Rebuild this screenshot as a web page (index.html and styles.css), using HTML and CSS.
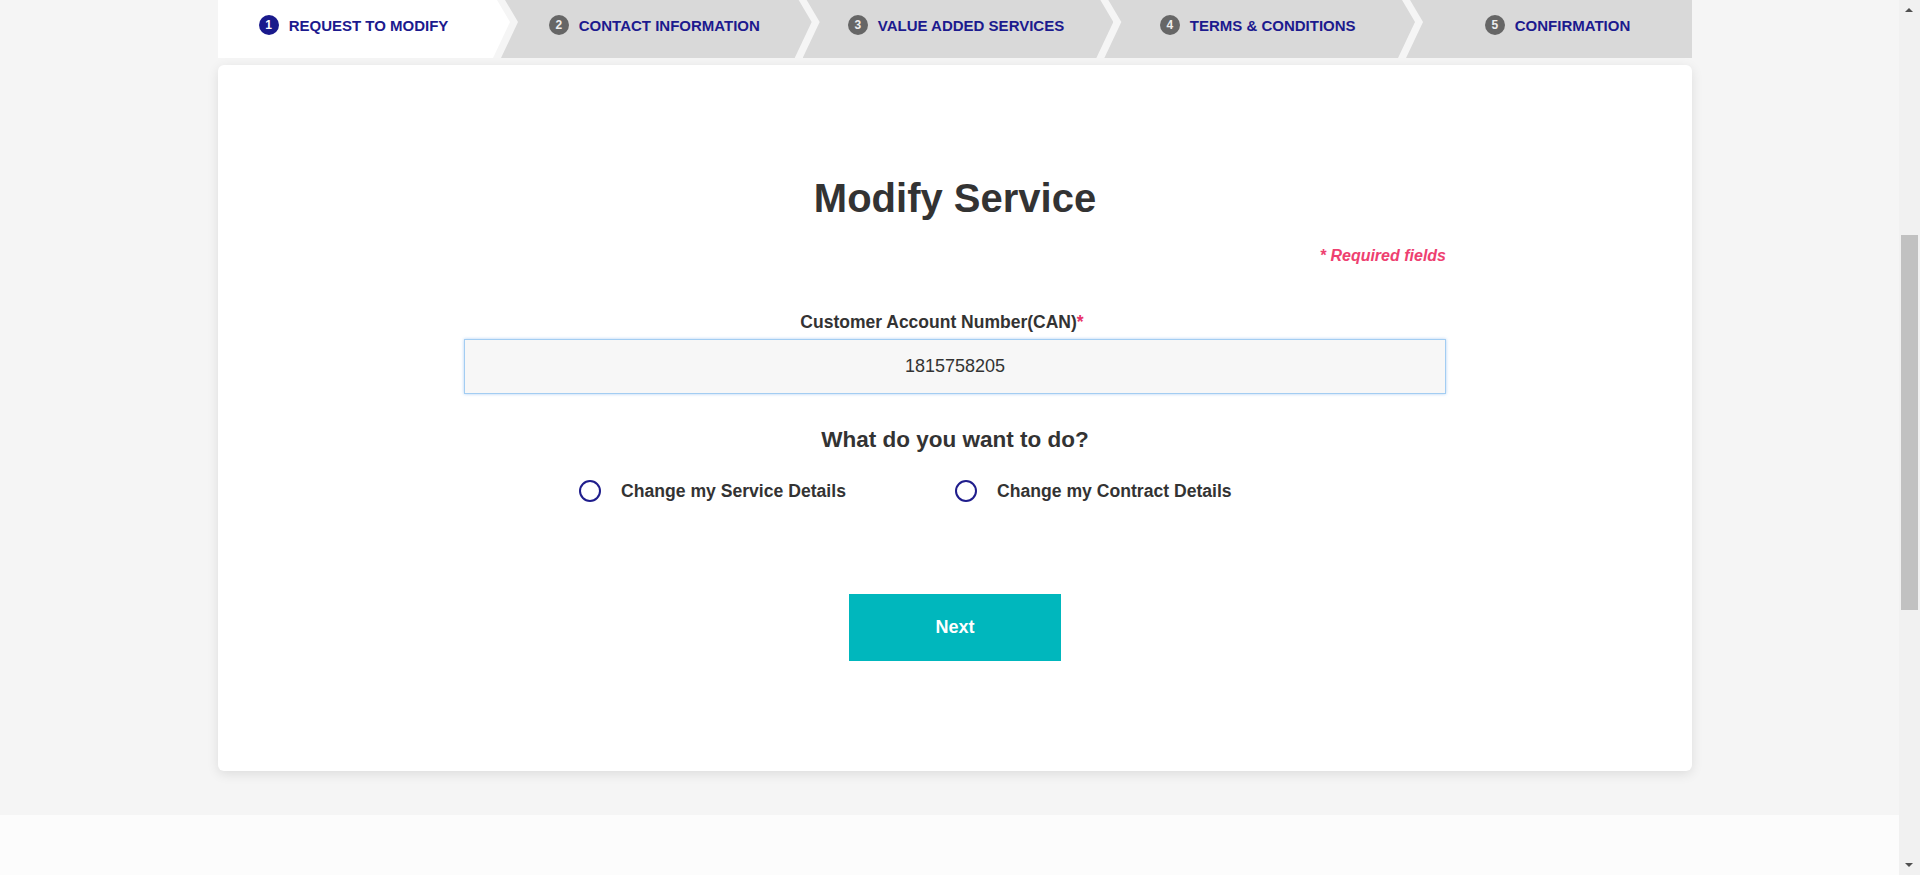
FILE: index.html
```html
<!DOCTYPE html>
<html lang="en">
<head>
<meta charset="utf-8">
<title>Modify Service</title>
<link rel="stylesheet" href="styles.css">
</head>
<body>
<div class="page">
  <div class="main">
    <div class="wrap">
      <nav class="steps">
        <div class="step step-first active"><span class="num">1</span><span class="lbl">REQUEST TO MODIFY</span></div>
        <div class="step"><span class="num">2</span><span class="lbl">CONTACT INFORMATION</span></div>
        <div class="step"><span class="num">3</span><span class="lbl">VALUE ADDED SERVICES</span></div>
        <div class="step"><span class="num">4</span><span class="lbl">TERMS &amp; CONDITIONS</span></div>
        <div class="step step-last"><span class="num">5</span><span class="lbl">CONFIRMATION</span></div>
      </nav>
      <section class="card">
        <h1 class="title">Modify Service</h1>
        <div class="form">
          <div class="req">* Required fields</div>
          <label class="label" for="can">Customer Account Number(CAN)<span class="star">*</span></label>
          <input class="input" id="can" type="text" value="1815758205" readonly>
          <h2 class="question">What do you want to do?</h2>
          <div class="options">
            <div class="option"><span class="radio"></span><span>Change my Service Details</span></div>
            <div class="option"><span class="radio"></span><span>Change my Contract Details</span></div>
          </div>
          <button class="btn" type="button">Next</button>
        </div>
      </section>
    </div>
  </div>
  <footer class="footer"></footer>
</div>
<div class="scrollbar">
  <span class="arrow-up"></span>
  <span class="thumb"></span>
  <span class="arrow-down"></span>
</div>
</body>
</html>
```
FILE: styles.css
```css
html, body {
  margin: 0;
  padding: 0;
  height: 100%;
  overflow: hidden;
}
body {
  font-family: "Liberation Sans", Arial, sans-serif;
  color: #333;
  background: #fcfcfc;
}
.main {
  background: #f5f5f5;
  padding-bottom: 44px;
}
.wrap {
  width: 1474px;
  margin-left: 218px;
}
.steps {
  display: flex;
  height: 58px;
}
.step {
  flex: 1;
  height: 58px;
  box-sizing: border-box;
  margin-left: -9px;
  padding: 0 21px 8px 17px;
  background: #d9d9d9;
  display: flex;
  align-items: center;
  justify-content: center;
  gap: 10px;
  clip-path: polygon(4px 0, calc(100% - 13px) 0, 100% 22px, calc(100% - 17px) 100%, 0 100%, 17px 22px);
}
.step-first {
  flex: 0 0 292px;
  margin-left: 0;
  padding-left: 0;
  background: #fff;
  clip-path: polygon(0 0, calc(100% - 13px) 0, 100% 22px, calc(100% - 17px) 100%, 0 100%);
}
.step-last {
  flex: 0 0 286px;
  padding-right: 0;
  clip-path: polygon(4px 0, 100% 0, 100% 100%, 0 100%, 17px 22px);
}
.num {
  width: 20px;
  height: 20px;
  border-radius: 50%;
  background: #666;
  color: #eee;
  font-size: 12px;
  font-weight: bold;
  line-height: 20px;
  text-align: center;
  flex: none;
}
.active .num {
  background: #1a1a8c;
  color: #fff;
}
.lbl {
  font-size: 15px;
  font-weight: bold;
  color: #1c1a8e;
  white-space: nowrap;
  line-height: 19px;
}
.card {
  margin-top: 7px;
  background: #fff;
  border-radius: 6px;
  box-shadow: 0 3px 12px rgba(0, 0, 0, 0.1);
  padding: 109px 0 110px;
  display: flex;
  flex-direction: column;
  align-items: center;
}
.title {
  margin: 0;
  font-size: 40px;
  line-height: 48px;
  font-weight: bold;
  color: #333;
}
.form {
  width: 982px;
  display: flex;
  flex-direction: column;
  align-items: center;
}
.req {
  align-self: flex-end;
  margin-top: 24px;
  font-size: 16px;
  line-height: 20px;
  font-style: italic;
  font-weight: bold;
  color: #ee4070;
}
.label {
  margin-top: 45px;
  padding-right: 26px;
  font-size: 17.5px;
  line-height: 22px;
  font-weight: bold;
  color: #333;
}
.star {
  color: #e8336b;
}
.input {
  margin: 6px 0 0;
  width: 100%;
  height: 55px;
  box-sizing: border-box;
  border: 1px solid #a3cdf2;
  background: #f7f7f7;
  box-shadow: 0 0 3px rgba(110, 170, 235, 0.55);
  text-align: center;
  font-family: "Liberation Sans", Arial, sans-serif;
  font-size: 18px;
  color: #333;
  outline: none;
  padding: 0;
}
.question {
  margin: 32px 0 0;
  font-size: 22.5px;
  line-height: 28px;
  font-weight: bold;
  color: #333;
}
.options {
  margin-top: 25px;
  display: flex;
}
.option {
  width: 376px;
  display: flex;
  align-items: center;
  gap: 20px;
  font-size: 17.6px;
  line-height: 24px;
  font-weight: bold;
  color: #333;
}
.radio {
  width: 22px;
  height: 22px;
  box-sizing: border-box;
  border: 2px solid #1f1d8c;
  border-radius: 50%;
  flex: none;
}
.btn {
  margin-top: 91px;
  width: 212px;
  height: 67px;
  border: 0;
  background: #00b7bd;
  color: #fff;
  font-family: "Liberation Sans", Arial, sans-serif;
  font-size: 18px;
  font-weight: bold;
  cursor: pointer;
}
.footer {
  height: 200px;
  background: #fcfcfc;
}
.scrollbar {
  position: fixed;
  top: 0;
  right: 0;
  width: 21px;
  height: 100%;
  background: #f1f1f1;
}
.thumb {
  position: absolute;
  left: 2px;
  right: 2px;
  top: 235px;
  height: 375px;
  background: #c1c1c1;
}
.arrow-up, .arrow-down {
  position: absolute;
  left: 6px;
  width: 0;
  height: 0;
  border-left: 4px solid transparent;
  border-right: 4px solid transparent;
}
.arrow-up {
  top: 8px;
  border-bottom: 4px solid #505050;
}
.arrow-down {
  bottom: 8px;
  border-top: 4px solid #505050;
}
```
